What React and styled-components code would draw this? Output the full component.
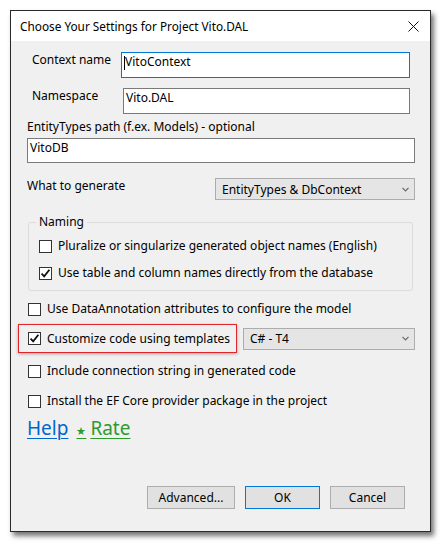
import React from 'react';
import styled, { createGlobalStyle } from 'styled-components';

const GlobalStyle = createGlobalStyle`
  html, body {
    margin: 0;
    padding: 0;
    background: #ffffff;
  }
  body {
    font-family: 'Noto Sans', 'Open Sans', sans-serif;
    font-size: 12px;
    color: #000;
  }
`;

const Page = styled.div`
  width: 442px;
  height: 543px;
  padding: 10px 0 0 10px;
  box-sizing: border-box;
`;

const Window = styled.div`
  width: 421px;
  height: 522px;
  box-sizing: border-box;
  border: 1px solid #2a2a2a;
  box-shadow: 3px 4px 5px rgba(0, 0, 0, 0.55);
  display: flex;
  flex-direction: column;
  background: #f0f0f0;
`;

const TitleBar = styled.div`
  height: 30px;
  flex: none;
  background: #ffffff;
  display: flex;
  align-items: center;
  padding: 0 11px 0 9px;
`;

const Title = styled.div`
  flex: 1;
  font-size: 11.8px;
  color: #000;
`;

const CloseIcon = () => (
  <svg width="11" height="11" viewBox="0 0 11 11">
    <path d="M0.5 0.5 L10.5 10.5 M10.5 0.5 L0.5 10.5" stroke="#111" strokeWidth="1" />
  </svg>
);

const Body = styled.div`
  flex: 1;
  display: flex;
  flex-direction: column;
  padding: 11px 15px 0 16px;
`;

const FieldRow = styled.div`
  display: flex;
  align-items: flex-start;
  padding: 0 ${(p) => p.$right || 5}px 0 5px;
  margin-top: ${(p) => p.$top || 0}px;
`;

const Label = styled.div`
  width: ${(p) => p.$width}px;
  flex: none;
  line-height: 16px;
`;

const TextInput = styled.div`
  flex: 1;
  height: ${(p) => p.$height || 26}px;
  box-sizing: border-box;
  background: #fff;
  border: 1px solid ${(p) => (p.$focused ? '#0078d7' : '#7a7a7a')};
  padding: 1px 2px;
  line-height: 16px;
  font-size: 12px;
  display: flex;
  align-items: flex-start;
`;

const Caret = styled.span`
  display: inline-block;
  width: 1px;
  height: 14px;
  margin-top: 2px;
  background: #000;
`;

const PathLabel = styled.div`
  margin-top: 5px;
  line-height: 16px;
`;

const PathInput = styled(TextInput)`
  flex: none;
  margin-top: 3px;
  height: 25px;
`;

const GenerateRow = styled.div`
  display: flex;
  align-items: flex-start;
  justify-content: space-between;
  margin-top: 15px;
`;

const Select = styled.div`
  width: ${(p) => p.$width}px;
  height: 22px;
  box-sizing: border-box;
  border: 1px solid #acacac;
  background: #e5e5e5;
  display: flex;
  align-items: center;
  padding: 0 5px 0 6px;
  font-size: 12px;
`;

const SelectText = styled.span`
  flex: 1;
`;

const Chevron = () => (
  <svg width="7" height="5" viewBox="0 0 7 5">
    <path d="M0.5 0.8 L3.5 3.8 L6.5 0.8" stroke="#666" strokeWidth="1.2" fill="none" />
  </svg>
);

const Group = styled.fieldset`
  margin: 14px 2px 0 1px;
  padding: 8px 0 9px 10px;
  border: 1px solid #dcdcdc;
  border-radius: 3px;
  display: flex;
  flex-direction: column;
  gap: 11px;
`;

const Legend = styled.legend`
  padding: 0 3px;
  margin-left: -3px;
  line-height: 16px;
  font-size: 12px;
`;

const CheckRow = styled.div`
  display: flex;
  align-items: center;
  gap: 6px;
  height: 16px;
  margin-top: ${(p) => p.$top || 0}px;
`;

const Box = styled.span`
  width: 13px;
  height: 13px;
  box-sizing: border-box;
  border: 1px solid #333;
  background: #fff;
  flex: none;
  display: flex;
  align-items: center;
  justify-content: center;
`;

const CheckText = styled.span`
  font-size: 12px;
  line-height: 16px;
`;

const Check = ({ checked, children, top }) => (
  <CheckRow $top={top}>
    <Box>
      {checked && (
        <svg width="11" height="11" viewBox="0 0 11 11">
          <path d="M1.6 5.6 L4.2 8.4 L9.4 1.8" stroke="#111" strokeWidth="1.8" fill="none" />
        </svg>
      )}
    </Box>
    <CheckText>{children}</CheckText>
  </CheckRow>
);

const Options = styled.div`
  display: flex;
  flex-direction: column;
  padding-left: 1px;
`;

const TemplateRow = styled.div`
  display: flex;
  align-items: center;
  margin-top: 7px;
  margin-left: -10px;
  gap: 6px;
`;

const Highlight = styled.div`
  width: 219px;
  height: 29px;
  box-sizing: border-box;
  border: 1.5px solid #e0262b;
  box-shadow: 0 1px 3px rgba(0, 0, 0, 0.3);
  display: flex;
  align-items: center;
  padding-left: 9px;
`;

const Links = styled.div`
  display: flex;
  align-items: baseline;
  gap: 6px;
  margin-top: 6px;
  font-size: 19px;
  line-height: 26px;
`;

const Link = styled.a`
  color: ${(p) => p.$color};
  text-decoration: underline;
  text-underline-offset: 3px;
  text-decoration-thickness: 1px;
`;

const Star = styled.span`
  font-size: 11px;
  margin-right: 4px;
  margin-left: 2px;
`;

const Buttons = styled.div`
  margin-top: auto;
  margin-bottom: 22px;
  display: flex;
  justify-content: flex-end;
  gap: 10px;
  padding-right: 10px;
`;

const Button = styled.div`
  width: ${(p) => p.$width}px;
  height: 23px;
  box-sizing: border-box;
  border: 1px solid ${(p) => (p.$primary ? '#0078d7' : '#adadad')};
  background: #e1e1e1;
  display: flex;
  align-items: center;
  justify-content: center;
  font-size: 12px;
`;

export default function App() {
  return (
    <Page>
      <GlobalStyle />
      <Window>
        <TitleBar>
          <Title>Choose Your Settings for Project Vito.DAL</Title>
          <CloseIcon />
        </TitleBar>
        <Body>
          <FieldRow>
            <Label $width={89}>Context name</Label>
            <TextInput $focused>
              <Caret />
              VitoContext
            </TextInput>
          </FieldRow>
          <FieldRow $top={10}>
            <Label $width={91}>Namespace</Label>
            <TextInput>Vito.DAL</TextInput>
          </FieldRow>
          <PathLabel>EntityTypes path (f.ex. Models) - optional</PathLabel>
          <PathInput>VitoDB</PathInput>
          <GenerateRow>
            <Label $width={150}>What to generate</Label>
            <Select $width={200}>
              <SelectText>EntityTypes &amp; DbContext</SelectText>
              <Chevron />
            </Select>
          </GenerateRow>
          <Group>
            <Legend>Naming</Legend>
            <Check>Pluralize or singularize generated object names (English)</Check>
            <Check checked>Use table and column names directly from the database</Check>
          </Group>
          <Options>
            <Check top={10}>Use DataAnnotation attributes to configure the model</Check>
            <TemplateRow>
              <Highlight>
                <Check checked>Customize code using templates</Check>
              </Highlight>
              <Select $width={172}>
                <SelectText>C# - T4</SelectText>
                <Chevron />
              </Select>
            </TemplateRow>
            <Check top={10}>Include connection string in generated code</Check>
            <Check top={14}>Install the EF Core provider package in the project</Check>
          </Options>
          <Links>
            <Link $color="#0066cc">Help</Link>
            <Link $color="#2e9a2e">
              <Star>★</Star>Rate
            </Link>
          </Links>
          <Buttons>
            <Button $width={88}>Advanced...</Button>
            <Button $width={75} $primary>OK</Button>
            <Button $width={75}>Cancel</Button>
          </Buttons>
        </Body>
      </Window>
    </Page>
  );
}
